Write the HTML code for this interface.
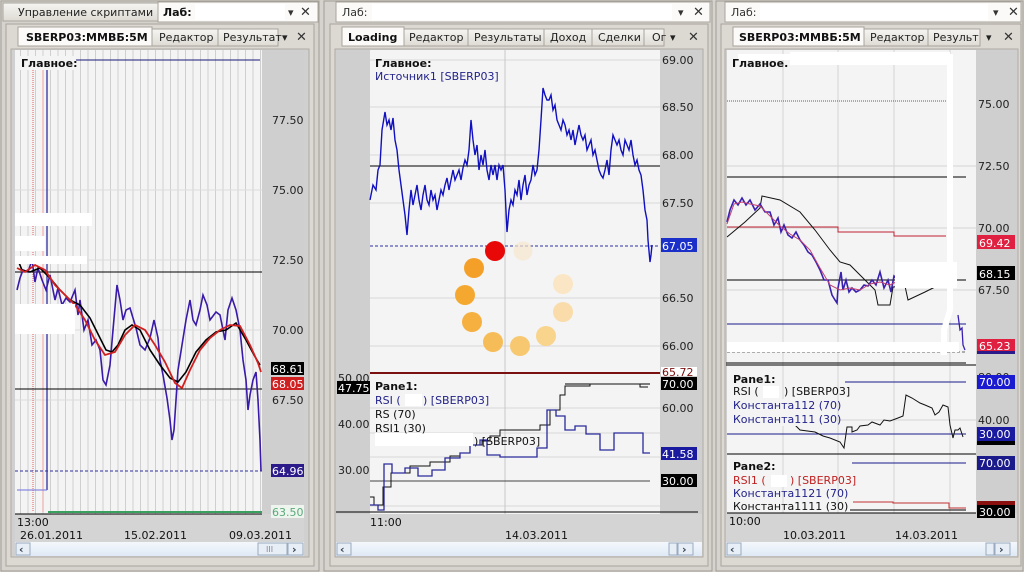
<!DOCTYPE html>
<html><head><meta charset="utf-8">
<style>
html,body{margin:0;padding:0;width:1024px;height:572px;overflow:hidden;background:#d6d3ce;}
svg{display:block;font-family:"DejaVu Sans","Liberation Sans",sans-serif;font-size:11px;}
</style></head><body>
<svg width="1024" height="572" viewBox="0 0 1024 572" xmlns="http://www.w3.org/2000/svg">
<defs>
<pattern id="vg" x="20" y="0" width="7.5" height="10" patternUnits="userSpaceOnUse">
<rect width="7.5" height="10" fill="#f4f4f4"/><line x1="0.5" y1="0" x2="0.5" y2="10" stroke="#cfcfcf"/>
</pattern>
<linearGradient id="sb" x1="0" y1="0" x2="0" y2="1"><stop offset="0" stop-color="#f4f8fc"/><stop offset="1" stop-color="#dfe9f5"/></linearGradient>
<linearGradient id="tab" x1="0" y1="0" x2="0" y2="1"><stop offset="0" stop-color="#f6f5f2"/><stop offset="1" stop-color="#dedbd4"/></linearGradient>
</defs>
<rect width="1024" height="572" fill="#d6d3ce"/>

<!-- ============ PANEL 1 ============ -->
<rect x="1" y="1" width="318" height="570" fill="#d6d3ce" stroke="#a09c94"/>
<rect x="3" y="3" width="155" height="18" fill="url(#tab)" stroke="#a8a49c"/>
<text x="18" y="16" fill="#222">Управление скриптами</text>
<rect x="158" y="2" width="160" height="20" fill="#fbfaf8" stroke="#a8a49c"/>
<text x="163" y="16" font-weight="bold" fill="#111">Лаб:</text>
<rect x="195" y="4" width="90" height="16" fill="#fff"/>
<text x="288" y="16" fill="#333">▾</text><text x="300" y="16" fill="#333" font-size="13">✕</text>
<rect x="6" y="24" width="308" height="542" fill="#dcd9d2" stroke="#a8a49c"/>
<rect x="18" y="27" width="134" height="19" fill="#fbfaf8" stroke="#a8a49c"/>
<text x="26" y="41" font-weight="bold" fill="#111">SBERP03:MMBБ:5M</text>
<rect x="152" y="29" width="66" height="17" fill="url(#tab)" stroke="#a8a49c"/>
<text x="159" y="41" fill="#222">Редактор</text>
<rect x="218" y="29" width="60" height="17" fill="url(#tab)" stroke="#a8a49c"/>
<text x="223" y="41" fill="#222">Результат</text>
<text x="282" y="41" fill="#222">▾</text><text x="296" y="41" fill="#333" font-size="13">✕</text>
<rect x="11" y="49" width="298" height="508" fill="#d0d0d0" stroke="#b0aca4"/>
<rect x="15" y="50" width="247" height="464" fill="url(#vg)"/>
<rect x="262" y="50" width="42" height="464" fill="#cfcfcf"/>
<rect x="15" y="514" width="289" height="28" fill="#d4d4d4"/>
<line x1="15" y1="330" x2="262" y2="330" stroke="#dcdcdc"/>
<line x1="15" y1="260" x2="262" y2="260" stroke="#dcdcdc"/>
<line x1="15" y1="190" x2="262" y2="190" stroke="#dcdcdc"/>
<line x1="15" y1="400" x2="262" y2="400" stroke="#dcdcdc"/>
<line x1="75" y1="60" x2="260" y2="60" stroke="#1a1a7a"/>
<line x1="33" y1="70" x2="33" y2="512" stroke="#e06060" stroke-dasharray="1,1"/>
<line x1="43" y1="70" x2="43" y2="512" stroke="#f0a0a0"/>
<line x1="47" y1="70" x2="47" y2="490" stroke="#3030a0" stroke-width="1.3"/>
<polyline points="17,490 47,490" fill="none" stroke="#7070e0"/>
<line x1="15" y1="272" x2="262" y2="272" stroke="#000"/>
<line x1="15" y1="389" x2="262" y2="389" stroke="#000"/>
<line x1="15" y1="471" x2="262" y2="471" stroke="#3030a0" stroke-dasharray="3,2"/>
<line x1="48" y1="512" x2="262" y2="512" stroke="#3aa060" stroke-width="2"/>
<line x1="15" y1="514" x2="262" y2="514" stroke="#000"/>
<polyline fill="none" stroke="#3a1aa8" stroke-width="1.6" points="17,290 20,278 23,270 28,272 32,260 35,282 38,268 42,280 46,290 50,275 55,300 58,288 62,305 66,298 70,302 75,290 78,315 80,300 84,330 88,320 92,345 96,340 100,350 103,380 106,385 108,375 110,365 113,330 117,285 120,300 123,320 126,310 130,308 133,318 136,328 140,345 145,350 150,338 154,320 158,338 160,360 163,375 167,398 170,420 172,440 174,430 176,400 178,370 182,345 186,320 190,300 193,320 196,325 200,310 203,295 207,305 210,320 213,316 216,312 220,315 225,340 228,310 232,298 236,310 240,330 243,360 246,380 248,410 250,395 253,380 256,372 258,400 260,440 261,471"/>
<polyline fill="none" stroke="#000" stroke-width="1.6" points="17,258 22,270 30,272 40,268 50,278 60,290 70,300 80,305 90,318 100,338 106,350 112,352 118,345 125,330 132,325 140,330 150,350 160,365 170,378 178,382 186,372 196,352 206,340 216,332 226,330 236,323 246,340 254,355 260,365"/>
<polyline fill="none" stroke="#d02020" stroke-width="1.8" points="17,268 25,272 35,265 45,270 55,285 65,295 75,305 85,320 95,340 105,355 115,352 125,335 135,325 145,330 155,345 165,362 175,383 182,388 190,370 200,350 210,338 220,330 230,325 240,326 250,345 258,363 261,372"/>
<rect x="15" y="213" width="77" height="13" fill="#fff"/><rect x="15" y="236" width="30" height="15" fill="#fff"/>
<rect x="15" y="256" width="72" height="8" fill="#fff"/><rect x="15" y="304" width="60" height="30" fill="#fff"/>
<rect x="18" y="56" width="58" height="14" fill="#f4f4f4"/>
<text x="21" y="67" font-weight="bold" fill="#111">Главное:</text>
<g fill="#222"><text x="272" y="124">77.50</text><text x="272" y="194">75.00</text><text x="272" y="264">72.50</text><text x="272" y="334">70.00</text><text x="272" y="404">67.50</text></g>
<rect x="271" y="362" width="33" height="13" fill="#000"/><text x="272" y="373" fill="#fff">68.61</text>
<rect x="271" y="377" width="33" height="13" fill="#d02020"/><text x="272" y="388" fill="#fff">68.05</text>
<rect x="271" y="464" width="33" height="13" fill="#2a1a8a"/><text x="272" y="475" fill="#fff">64.96</text>
<rect x="271" y="505" width="33" height="13" fill="#eef4ee"/><text x="272" y="516" fill="#5aaa7a">63.50</text>
<text x="17" y="526" fill="#111">13:00</text>
<g fill="#111"><text x="20" y="539">26.01.2011</text><text x="124" y="539">15.02.2011</text><text x="229" y="539">09.03.2011</text></g>
<rect x="15" y="542" width="289" height="14" fill="url(#sb)"/>
<rect x="16" y="543" width="14" height="12" fill="#e8eef6" stroke="#9aaac0"/><text x="19" y="553" fill="#345" font-weight="bold">‹</text>
<rect x="258" y="543" width="29" height="12" fill="#e8eef6" stroke="#9aaac0"/><text x="266" y="552" fill="#889" font-size="8">III</text>
<rect x="288" y="543" width="15" height="12" fill="#e8eef6" stroke="#9aaac0"/><text x="292" y="553" fill="#345" font-weight="bold">›</text>

<!-- ============ PANEL 2 ============ -->
<rect x="324" y="1" width="388" height="570" fill="#d6d3ce" stroke="#a09c94"/>
<rect x="336" y="2" width="374" height="20" fill="#fbfaf8" stroke="#a8a49c"/>
<text x="342" y="16" fill="#333">Лаб:</text>
<rect x="372" y="4" width="300" height="16" fill="#fff"/>
<text x="678" y="16" fill="#333">▾</text><text x="693" y="16" fill="#333" font-size="13">✕</text>
<rect x="330" y="24" width="378" height="542" fill="#dcd9d2" stroke="#a8a49c"/>
<rect x="342" y="27" width="62" height="19" fill="#fbfaf8" stroke="#a8a49c"/>
<text x="348" y="41" font-weight="bold" fill="#111">Loading</text>
<rect x="404" y="29" width="64" height="17" fill="url(#tab)" stroke="#a8a49c"/><text x="409" y="41" fill="#222">Редактор</text>
<rect x="468" y="29" width="76" height="17" fill="url(#tab)" stroke="#a8a49c"/><text x="474" y="41" fill="#222">Результаты</text>
<rect x="544" y="29" width="48" height="17" fill="url(#tab)" stroke="#a8a49c"/><text x="550" y="41" fill="#222">Доход</text>
<rect x="592" y="29" width="52" height="17" fill="url(#tab)" stroke="#a8a49c"/><text x="598" y="41" fill="#222">Сделки</text>
<rect x="644" y="29" width="20" height="17" fill="url(#tab)" stroke="#a8a49c"/><text x="652" y="41" fill="#222">Ог</text>
<text x="670" y="41" fill="#222">▾</text><text x="688" y="41" fill="#333" font-size="13">✕</text>
<rect x="335" y="49" width="368" height="508" fill="#cfcfcf" stroke="#b0aca4"/>
<rect x="370" y="50" width="290" height="464" fill="#f4f4f4"/>
<rect x="660" y="50" width="38" height="464" fill="#cfcfcf"/>
<rect x="336" y="514" width="366" height="28" fill="#d4d4d4"/>
<g stroke="#d8d8d8"><line x1="370" y1="60" x2="660" y2="60"/><line x1="370" y1="107" x2="660" y2="107"/><line x1="370" y1="155" x2="660" y2="155"/><line x1="370" y1="203" x2="660" y2="203"/><line x1="370" y1="298" x2="660" y2="298"/><line x1="370" y1="346" x2="660" y2="346"/><line x1="370" y1="408" x2="660" y2="408"/><line x1="370" y1="433" x2="660" y2="433"/><line x1="370" y1="457" x2="660" y2="457"/><line x1="370" y1="506" x2="660" y2="506"/></g>
<line x1="505" y1="50" x2="505" y2="514" stroke="#c8c8c8"/>
<line x1="370" y1="166" x2="660" y2="166" stroke="#000"/>
<line x1="370" y1="246" x2="660" y2="246" stroke="#3030a0" stroke-dasharray="3,2"/>
<polyline fill="none" stroke="#1010c0" stroke-width="1.4" points="370,200 373,185 376,190 378,170 380,165 382,130 384,118 385,112 387,125 389,120 391,130 393,118 395,140 397,150 399,170 401,185 403,200 405,215 407,235 409,210 411,190 413,205 415,195 417,185 419,200 421,210 423,195 425,185 427,200 429,205 431,190 433,200 435,195 437,210 439,200 441,190 443,195 445,185 447,178 449,190 451,180 453,170 455,180 457,175 459,170 461,180 463,168 465,160 467,165 469,150 471,120 473,140 475,155 477,145 479,170 481,155 483,165 485,150 487,170 489,180 491,165 493,175 495,165 497,180 499,165 501,170 503,165 505,190 507,232 509,210 511,200 513,205 515,190 517,195 519,180 521,200 523,185 525,175 527,195 529,185 531,180 533,165 535,175 537,170 539,150 541,120 543,88 545,95 547,100 549,100 551,95 553,110 555,105 557,120 559,125 561,130 563,120 565,125 567,135 569,130 571,140 573,130 575,145 577,135 579,125 581,135 583,140 585,135 587,150 589,145 591,140 593,155 595,150 597,160 599,170 601,175 603,178 605,170 607,160 609,175 611,150 613,135 615,140 617,145 619,140 621,150 623,155 625,140 627,145 629,150 631,140 633,155 635,165 637,160 639,170 641,175 643,190 645,210 647,220 648,240 650,262 651,255 652,245"/>
<circle cx="523" cy="251" r="9.5" fill="#f6e6cc" opacity="0.7"/>
<circle cx="495" cy="251" r="10" fill="#e80808"/>
<circle cx="474" cy="268" r="10" fill="#f4a028"/>
<circle cx="465" cy="295" r="10" fill="#f4a830"/>
<circle cx="472" cy="322" r="10" fill="#f5b040"/>
<circle cx="493" cy="342" r="10" fill="#f6bc58"/>
<circle cx="520" cy="346" r="10" fill="#f7c870"/>
<circle cx="546" cy="336" r="10" fill="#f8d48c"/>
<circle cx="563" cy="312" r="10" fill="#f9dcaa"/>
<circle cx="563" cy="284" r="10" fill="#fae6c4"/>
<line x1="370" y1="373" x2="660" y2="373" stroke="#7a1010" stroke-width="2"/>
<line x1="336" y1="512" x2="698" y2="512" stroke="#000"/>
<line x1="565" y1="384" x2="650" y2="384" stroke="#000"/>
<line x1="370" y1="481" x2="650" y2="481" stroke="#444"/>
<polyline fill="none" stroke="#111" points="370,497 374,497 374,505 383,505 383,487 391,487 391,473 410,473 410,466 430,466 430,462 450,462 450,456 460,456 460,453 470,453 470,445 482,445 482,441 490,441 490,436 500,436 500,430 540,430 540,425 550,425 550,410 560,410 560,395 565,395 565,386 590,386 590,384 640,384 640,387 648,387"/>
<polyline fill="none" stroke="#2a2a9a" stroke-width="1.3" points="370,505 378,505 378,510 384,510 384,464 392,464 392,473 405,473 405,468 418,468 418,476 432,476 432,470 445,470 445,458 460,458 460,453 470,453 470,445 480,445 480,440 487,440 487,455 500,455 500,457 537,457 537,448 547,448 547,410 556,410 556,416 565,416 565,430 575,430 575,426 586,426 586,434 600,434 600,450 614,450 614,433 643,433 643,453 650,453"/>
<rect x="375" y="433" width="98" height="13" fill="#fff"/>
<g font-size="11"><text x="375" y="390" font-weight="bold" fill="#111">Pane1:</text>
<text x="375" y="404" fill="#22228a">RSI (</text><rect x="405" y="394" width="17" height="12" fill="#fff"/><text x="423" y="404" fill="#22228a">) [SBERP03]</text>
<text x="375" y="418" fill="#111">RS (70)</text><text x="375" y="432" fill="#111">RSI1 (30)</text>
<text x="474" y="445" fill="#111">) [SBERP03]</text></g>
<text x="375" y="67" font-weight="bold" fill="#111">Главное:</text>
<text x="375" y="80" fill="#22228a">Источник1 [SBERP03]</text>
<g fill="#222"><text x="662" y="64">69.00</text><text x="662" y="111">68.50</text><text x="662" y="159">68.00</text><text x="662" y="207">67.50</text><text x="662" y="302">66.50</text><text x="662" y="350">66.00</text><text x="662" y="412">60.00</text></g>
<rect x="661" y="238" width="36" height="14" fill="#1a30c8"/><text x="662" y="250" fill="#fff">67.05</text>
<rect x="661" y="367" width="36" height="9" fill="#fff"/><text x="662" y="376" fill="#7a1010">65.72</text>
<rect x="661" y="377" width="36" height="13" fill="#000"/><text x="662" y="388" fill="#fff">70.00</text>
<rect x="661" y="447" width="36" height="13" fill="#1a1aa0"/><text x="662" y="458" fill="#fff">41.58</text>
<rect x="661" y="474" width="36" height="13" fill="#000"/><text x="662" y="485" fill="#fff">30.00</text>
<g fill="#222"><text x="338" y="382">50.00</text><text x="338" y="428">40.00</text><text x="338" y="474">30.00</text></g>
<rect x="337" y="381" width="33" height="13" fill="#000"/><text x="338" y="392" fill="#fff">47.75</text>
<text x="370" y="526" fill="#111">11:00</text><text x="505" y="539" fill="#111">14.03.2011</text>
<rect x="336" y="542" width="366" height="14" fill="url(#sb)"/>
<rect x="337" y="543" width="14" height="12" fill="#e8eef6" stroke="#9aaac0"/><text x="340" y="553" fill="#345" font-weight="bold">‹</text>
<rect x="669" y="543" width="8" height="12" fill="#e8eef6" stroke="#9aaac0"/>
<rect x="678" y="543" width="15" height="12" fill="#e8eef6" stroke="#9aaac0"/><text x="682" y="553" fill="#345" font-weight="bold">›</text>

<!-- ============ PANEL 3 ============ -->
<rect x="716" y="1" width="307" height="570" fill="#d6d3ce" stroke="#a09c94"/>
<rect x="725" y="2" width="296" height="20" fill="#fbfaf8" stroke="#a8a49c"/>
<text x="731" y="16" fill="#333">Лаб:</text>
<rect x="760" y="4" width="228" height="16" fill="#fff"/>
<text x="993" y="16" fill="#333">▾</text><text x="1008" y="16" fill="#333" font-size="13">✕</text>
<rect x="721" y="24" width="300" height="542" fill="#dcd9d2" stroke="#a8a49c"/>
<rect x="733" y="27" width="131" height="19" fill="#fbfaf8" stroke="#a8a49c"/>
<text x="739" y="41" font-weight="bold" fill="#111">SBERP03:MMBБ:5M</text>
<rect x="864" y="29" width="64" height="17" fill="url(#tab)" stroke="#a8a49c"/><text x="870" y="41" fill="#222">Редактор</text>
<rect x="928" y="29" width="52" height="17" fill="url(#tab)" stroke="#a8a49c"/><text x="933" y="41" fill="#222">Результ</text>
<text x="986" y="41" fill="#222">▾</text><text x="1003" y="41" fill="#333" font-size="13">✕</text>
<rect x="725" y="49" width="293" height="508" fill="#cfcfcf" stroke="#b0aca4"/>
<rect x="727" y="50" width="249" height="463" fill="#f4f4f4"/>
<rect x="976" y="50" width="40" height="463" fill="#cfcfcf"/>
<rect x="726" y="513" width="291" height="29" fill="#d4d4d4"/>
<g stroke="#d4d4d4"><line x1="783" y1="50" x2="783" y2="513"/><line x1="838" y1="50" x2="838" y2="513"/><line x1="894" y1="50" x2="894" y2="513"/><line x1="950" y1="50" x2="950" y2="513"/><line x1="727" y1="166" x2="976" y2="166"/><line x1="727" y1="228" x2="976" y2="228"/><line x1="727" y1="290" x2="976" y2="290"/><line x1="727" y1="420" x2="976" y2="420"/></g>
<line x1="727" y1="101" x2="946" y2="101" stroke="#d03040" stroke-dasharray="1,1"/>
<line x1="727" y1="177" x2="966" y2="177" stroke="#000"/>
<line x1="727" y1="280" x2="966" y2="280" stroke="#000"/>
<line x1="727" y1="324" x2="966" y2="324" stroke="#1a1a8a"/>
<line x1="727" y1="352" x2="966" y2="352" stroke="#666" stroke-dasharray="3,2"/>
<line x1="726" y1="363" x2="966" y2="363" stroke="#000"/><line x1="726" y1="365" x2="976" y2="365" stroke="#000"/>
<polyline fill="none" stroke="#c02030" points="727,227 838,227 838,232 894,232 894,236 946,236"/>
<polyline fill="none" stroke="#111" points="727,237 745,222 760,208 762,196 780,200 800,212 815,230 830,250 840,262 850,265 865,280 875,290 878,305 890,305 893,287 905,286 908,300 925,292 945,282"/>
<polyline fill="none" stroke="#3a20b0" stroke-width="1.6" points="727,222 730,210 734,200 738,205 742,198 746,205 750,200 755,210 760,204 765,212 770,212 774,225 778,218 781,232 784,225 788,235 792,238 796,232 800,240 804,245 808,252 812,255 816,262 820,270 824,280 828,280 832,295 835,300 837,303 838,288 841,272 843,290 846,280 849,292 852,288 856,292 860,290 864,285 868,286 872,280 876,285 880,272 884,288 888,280 891,292 894,276 898,280 902,272 905,285 910,278"/>
<polyline fill="none" stroke="#c04070" points="727,224 734,204 742,202 750,204 760,206 770,216 780,226 790,234 800,240 810,250 820,268 830,285 840,290 850,288 860,290 870,284 880,282 890,285 900,280 910,280"/>
<polyline fill="none" stroke="#3a20b0" stroke-width="1.3" points="958,315 960,330 962,328 963,345 965,350"/>
<rect x="895" y="262" width="62" height="26" fill="#fff"/>
<rect x="727" y="342" width="232" height="10" fill="#fff"/>
<path d="M738,57 L950,57 L950,310 L944,330 L944,355" fill="none" stroke="#fff" stroke-width="6"/>
<rect x="790" y="52" width="160" height="13" fill="#fff"/>
<text x="732" y="67" font-weight="bold" fill="#111">Главное.</text>
<g fill="#222"><text x="978" y="108">75.00</text><text x="978" y="170">72.50</text><text x="978" y="232">70.00</text><text x="978" y="294">67.50</text><text x="978" y="381">80.00</text></g>
<rect x="977" y="235" width="38" height="14" fill="#e02040"/><text x="979" y="247" fill="#fff">69.42</text>
<rect x="977" y="266" width="38" height="14" fill="#000"/><text x="979" y="278" fill="#fff">68.15</text>
<rect x="977" y="340" width="38" height="14" fill="#2a1a8a"/><rect x="977" y="339" width="38" height="12" fill="#e02040"/><text x="979" y="350" fill="#fff">65.23</text>
<!-- pane1 -->
<line x1="845" y1="382" x2="966" y2="382" stroke="#1a1a8a"/>
<line x1="727" y1="434" x2="966" y2="434" stroke="#1a1a8a"/>
<line x1="727" y1="454" x2="976" y2="454" stroke="#000"/>
<polyline fill="none" stroke="#111" points="785,425 795,425 800,430 815,432 823,436 830,438 840,442 844,448 847,427 852,427 852,432 857,430 860,426 868,425 872,422 880,425 884,420 890,421 898,418 903,416 906,395 912,398 920,403 925,405 932,408 935,415 939,412 943,405 948,407 950,425 953,438 955,430 958,430 960,428 963,437"/>
<rect x="727" y="399" width="110" height="27" fill="#f4f4f4"/>
<text x="733" y="383" font-weight="bold" fill="#111">Pane1:</text>
<text x="733" y="395" fill="#111">RSI (</text><rect x="763" y="386" width="16" height="12" fill="#fff"/><text x="784" y="395" fill="#111">) [SBERP03]</text>
<text x="733" y="409" fill="#22228a">Константа112 (70)</text>
<text x="733" y="423" fill="#22228a">Константа111 (30)</text>
<rect x="977" y="375" width="38" height="14" fill="#1a1ad0"/><text x="979" y="386" fill="#fff">70.00</text>
<text x="978" y="424" fill="#222">40.00</text>
<rect x="977" y="427" width="38" height="14" fill="#1a1aa0"/><text x="979" y="438" fill="#fff">30.00</text>
<rect x="977" y="441" width="38" height="4" fill="#000"/>
<!-- pane2 -->
<line x1="852" y1="463" x2="966" y2="463" stroke="#1a1a8a"/>
<polyline fill="none" stroke="#c03030" points="853,502 893,502 893,503 949,503 949,508 966,508"/>
<line x1="727" y1="513" x2="976" y2="513" stroke="#000"/><line x1="850" y1="510" x2="966" y2="510" stroke="#000"/>
<text x="733" y="470" font-weight="bold" fill="#111">Pane2:</text>
<text x="733" y="484" fill="#c02020">RSI1 (</text><rect x="771" y="475" width="16" height="12" fill="#fff"/><text x="790" y="484" fill="#c02020">) [SBERP03]</text>
<text x="733" y="497" fill="#22228a">Константа1121 (70)</text>
<text x="733" y="510" fill="#111">Константа1111 (30)</text>
<rect x="977" y="456" width="38" height="14" fill="#1a1a8a"/><text x="979" y="467" fill="#fff">70.00</text>
<rect x="977" y="501" width="38" height="5" fill="#8a1010"/>
<rect x="977" y="505" width="38" height="13" fill="#000"/><text x="979" y="516" fill="#fff">30.00</text>
<text x="729" y="525" fill="#111">10:00</text>
<g fill="#111"><text x="783" y="539">10.03.2011</text><text x="895" y="539">14.03.2011</text></g>
<rect x="726" y="542" width="291" height="14" fill="url(#sb)"/>
<rect x="727" y="543" width="14" height="12" fill="#e8eef6" stroke="#9aaac0"/><text x="730" y="553" fill="#345" font-weight="bold">‹</text>
<rect x="986" y="543" width="8" height="12" fill="#e8eef6" stroke="#9aaac0"/>
<rect x="995" y="543" width="15" height="12" fill="#e8eef6" stroke="#9aaac0"/><text x="999" y="553" fill="#345" font-weight="bold">›</text>
</svg>
</body></html>
